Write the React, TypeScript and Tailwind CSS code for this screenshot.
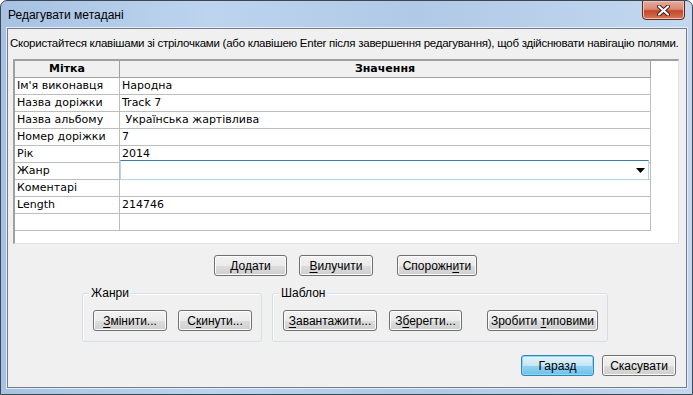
import React from "react";

const ui = { fontFamily: '"Liberation Sans", Arial, sans-serif' };
const grid = { fontFamily: '"DejaVu Sans", "Liberation Sans", sans-serif' };

const rows: [string, string][] = [
  ["Ім'я виконавця", "Народна"],
  ["Назва доріжки", "Track 7"],
  ["Назва альбому", "\u00a0Українська жартівлива"],
  ["Номер доріжки", "7"],
  ["Рік", "2014"],
  ["Жанр", ""],
  ["Коментарі", ""],
  ["Length", "214746"],
  ["", ""],
];

type BtnProps = {
  w: string;
  className?: string;
  isDefault?: boolean;
  children: React.ReactNode;
};

const Btn = ({ w, className = "", isDefault = false, children }: BtnProps) => (
  <div
    className={`${w} ${className} h-[21px] shrink-0 rounded-[3px] border flex items-center justify-center text-[12px] text-black ${
      isDefault
        ? "border-[#3c7fb1] bg-[linear-gradient(#e5f4fc_0%,#c4e5f6_50%,#98d1ef_51%,#6ac2ec_100%)] shadow-[inset_0_0_0_1px_#7fdcfb]"
        : "border-[#707070] bg-[linear-gradient(#f2f2f2_0%,#ebebeb_50%,#dddddd_51%,#cfcfcf_100%)] shadow-[inset_0_0_0_1px_#fcfcfc]"
    }`}
    style={ui}
  >
    <span className="whitespace-pre">{children}</span>
  </div>
);

const U = ({ children }: { children: React.ReactNode }) => <span className="underline underline-offset-2">{children}</span>;

const Group = ({ label, w, className = "", children }: { label: string; w: string; className?: string; children: React.ReactNode }) => (
  <div className={`${w} ${className} relative h-[49px] rounded-[3px] border border-[#d5dfe5] shadow-[inset_1px_1px_0_#fff] shrink-0`}>
    <span className="absolute -top-[9px] left-[6px] bg-[#f0f0f0] px-[2px] text-[12px] leading-[16px] text-black" style={ui}>
      {label}
    </span>
    <div className="flex pt-[16px]">{children}</div>
  </div>
);

export default function App() {
  return (
    <div className="w-[693px] h-[395px] overflow-hidden rounded-t-[7px] border border-[#3d4653] bg-[linear-gradient(90deg,#a7c2e2_0%,#bcd4ee_30%,#b0c9e6_60%,#c3d8ef_100%)] relative">
      <div className="h-[27px] flex items-center pl-[7px] text-[12px] text-black" style={ui}>
        Редагувати метадані
      </div>
      <div className="absolute top-[-1px] right-[7px] w-[43px] h-[20px] rounded-b-[4px] border border-[#5a2a25] bg-[linear-gradient(#e9a99b_0%,#d98a78_45%,#c5452c_55%,#d47a52_100%)] shadow-[inset_0_0_0_1px_#f0c2b6] flex items-center justify-center">
        <svg width="13" height="11" viewBox="0 0 13 11">
          <path d="M2 1.5 L11 9.5 M11 1.5 L2 9.5" stroke="#3a1a16" strokeWidth="4" strokeLinecap="round" />
          <path d="M2 1.5 L11 9.5 M11 1.5 L2 9.5" stroke="#ffffff" strokeWidth="2.2" strokeLinecap="round" />
        </svg>
      </div>
      <div className="ml-[6px] w-[680px] h-[360px] border border-[#6f7d8d] shadow-[0_0_0_1px_#e4edf7] bg-[#f0f0f0] flex flex-col">
        <div className="pt-[6px] pl-[2px] text-[11.5px] tracking-[-0.25px] leading-[16px] text-black whitespace-nowrap" style={ui}>
          Скористайтеся клавішами зі стрілочками (або клавішею Enter після завершення редагування), щоб здійснювати навігацію полями.
        </div>
        <div
          className="mt-[8px] ml-[5px] w-[666px] h-[185px] border-t-2 border-l-2 border-t-[#a0a0a0] border-l-[#a0a0a0] border-r border-b border-r-[#e3e3e3] border-b-[#e3e3e3] bg-white text-[11px] text-black"
          style={grid}
        >
          <div className="flex h-[17px] bg-[#f0f0f0] border-b border-[#a0a0a0] w-[636px]">
            <div className="w-[105px] border-r border-[#a0a0a0] text-center font-bold leading-[16px]">Мітка</div>
            <div className="w-[531px] border-r border-[#a0a0a0] text-center font-bold leading-[16px]">Значення</div>
          </div>
          {rows.map(([k, v], i) => (
            <div key={i} className="flex h-[17px] w-[636px] border-b border-[#bdbdbd]">
              <div className="w-[105px] shrink-0 border-r border-[#bdbdbd] pl-[2px] leading-[16px] whitespace-nowrap">{k}</div>
              <div className="w-[531px] shrink-0 border-r border-[#bdbdbd] pl-[2px] leading-[16px] whitespace-nowrap relative">
                {v}
                {k === "Жанр" && (
                  <div className="absolute left-0 right-[1px] top-[-3px] h-[20px] bg-white border border-[#b5d3ea] border-t-[#3d7bad] flex items-center justify-end pr-[3px]">
                    <svg width="9" height="5" viewBox="0 0 9 5">
                      <path d="M0 0 H9 L4.5 5 Z" fill="#000" />
                    </svg>
                  </div>
                )}
              </div>
            </div>
          ))}
        </div>
        <div className="mt-[11px] flex">
          <Btn w="w-[73px]" className="ml-[206px]">
            <U>Д</U>одати
          </Btn>
          <Btn w="w-[74px]" className="ml-[12px]">
            <U>В</U>илучити
          </Btn>
          <Btn w="w-[80px]" className="ml-[24px]">
            Спорожн<U>и</U>ти
          </Btn>
        </div>
        <div className="mt-[17px] flex">
          <Group label="Жанри" w="w-[180px]" className="ml-[74px]">
            <Btn w="w-[74px]" className="ml-[10px]">
              <U>З</U>мінити...
            </Btn>
            <Btn w="w-[74px]" className="ml-[11px]">
              С<U>к</U>инути...
            </Btn>
          </Group>
          <Group label="Шаблон" w="w-[336px]" className="ml-[10px]">
            <Btn w="w-[94px]" className="ml-[10px]">
              <U>З</U>авантажити...
            </Btn>
            <Btn w="w-[73px]" className="ml-[12px]">
              З<U>б</U>ерегти...
            </Btn>
            <Btn w="w-[111px]" className="ml-[25px]">
              Зробити <U>т</U>иповими
            </Btn>
          </Group>
        </div>
        <div className="mt-[13px] flex justify-end pr-[10px] gap-[8px]">
          <Btn w="w-[73px]" isDefault>
            Гаразд
          </Btn>
          <Btn w="w-[74px]">Скасувати</Btn>
        </div>
      </div>
    </div>
  );
}
